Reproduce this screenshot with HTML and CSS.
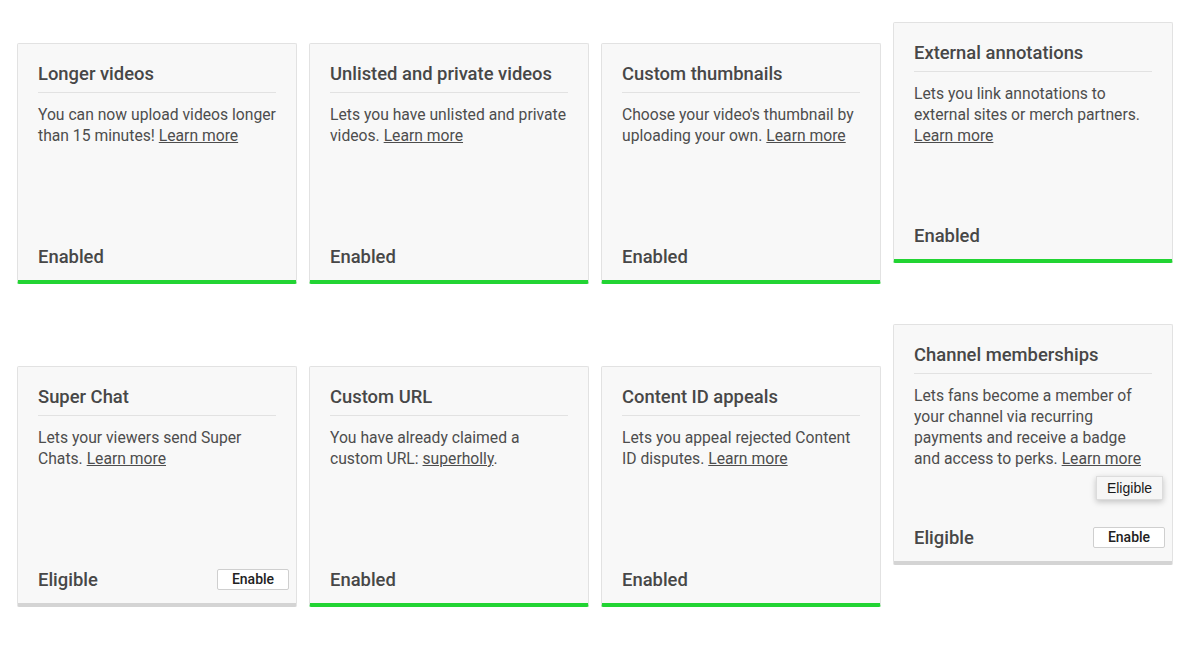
FILE: index.html
```html
<!DOCTYPE html>
<html lang="en">
<head>
<meta charset="utf-8">
<title>Channel features</title>
<link rel="stylesheet" href="styles.css">
</head>
<body>
<main class="features">
  <section class="row row-first">
    <article class="card enabled">
      <h2 class="card-title">Longer videos</h2>
      <p class="card-desc">You can now upload videos longer than 15 minutes! <a href="#">Learn more</a></p>
      <div class="card-foot"><span class="status">Enabled</span></div>
    </article>
    <article class="card enabled">
      <h2 class="card-title">Unlisted and private videos</h2>
      <p class="card-desc">Lets you have unlisted and private videos. <a href="#">Learn more</a></p>
      <div class="card-foot"><span class="status">Enabled</span></div>
    </article>
    <article class="card enabled">
      <h2 class="card-title">Custom thumbnails</h2>
      <p class="card-desc">Choose your video's thumbnail by uploading your own. <a href="#">Learn more</a></p>
      <div class="card-foot"><span class="status">Enabled</span></div>
    </article>
    <article class="card enabled lift-1">
      <h2 class="card-title">External annotations</h2>
      <p class="card-desc">Lets you link annotations to external sites or merch partners. <a href="#">Learn more</a></p>
      <div class="card-foot"><span class="status">Enabled</span></div>
    </article>
  </section>
  <section class="row">
    <article class="card eligible">
      <h2 class="card-title">Super Chat</h2>
      <p class="card-desc">Lets your viewers send Super Chats. <a href="#">Learn more</a></p>
      <div class="card-foot"><span class="status">Eligible</span><button class="enable-btn">Enable</button></div>
    </article>
    <article class="card enabled">
      <h2 class="card-title">Custom URL</h2>
      <p class="card-desc">You have already claimed a custom URL: <a href="#">superholly</a>.</p>
      <div class="card-foot"><span class="status">Enabled</span></div>
    </article>
    <article class="card enabled">
      <h2 class="card-title">Content ID appeals</h2>
      <p class="card-desc">Lets you appeal rejected Content ID disputes. <a href="#">Learn more</a></p>
      <div class="card-foot"><span class="status">Enabled</span></div>
    </article>
    <article class="card eligible lift-2">
      <h2 class="card-title">Channel memberships</h2>
      <p class="card-desc">Lets fans become a member of your channel via recurring payments and receive a badge and access to perks. <a href="#">Learn more</a></p>
      <div class="card-foot"><span class="status">Eligible</span><button class="enable-btn">Enable</button></div>
      <div class="tooltip">Eligible</div>
    </article>
  </section>
</main>
</body>
</html>
```

FILE: styles.css
```css
html, body {
  margin: 0;
  padding: 0;
  background: #ffffff;
}

body {
  font-family: Roboto, "Liberation Sans", Arial, sans-serif;
  color: #444;
}

.features {
  padding: 22px 0 0 17px;
  display: flex;
  flex-direction: column;
  gap: 40px;
}

.row {
  display: flex;
  align-items: flex-end;
  gap: 12px;
}

.row-first {
  min-height: 261px;
}

.card {
  position: relative;
  box-sizing: border-box;
  width: 280px;
  height: 241px;
  background: #f8f8f8;
  border: 1px solid #e2e2e2;
  border-bottom: 4px solid #22d433;
  border-radius: 2px;
  padding: 18px 20px 11px 20px;
  display: flex;
  flex-direction: column;
}

.card.eligible {
  border-bottom-color: #d4d4d4;
}

.card.lift-1 {
  margin-bottom: 21px;
}

.card.lift-2 {
  margin-bottom: 42px;
}

.card-title {
  margin: 0;
  font-size: 18.4px;
  font-weight: 500;
  line-height: 24px;
  color: #474747;
  padding-bottom: 6px;
  border-bottom: 1px solid #e2e2e2;
  white-space: nowrap;
}

.card-desc {
  margin: 11px 0 0 0;
  font-size: 15.7px;
  line-height: 21px;
  color: #4d4d4d;
}

.card-desc a {
  color: #4d4d4d;
  text-decoration: underline;
}

.card-foot {
  margin-top: auto;
  display: flex;
  align-items: center;
  justify-content: space-between;
  height: 24px;
}

.status {
  font-size: 18.4px;
  font-weight: 500;
  line-height: 24px;
  color: #474747;
}

.enable-btn {
  margin-right: -13px;
  margin-bottom: 2px;
  width: 72px;
  height: 21px;
  padding: 0;
  background: #ffffff;
  border: 1px solid #cfcfcf;
  border-radius: 2px;
  font-family: Roboto, "Liberation Sans", Arial, sans-serif;
  font-size: 14px;
  font-weight: 500;
  color: #222;
  line-height: 19px;
}

.tooltip {
  position: absolute;
  left: 202px;
  top: 151px;
  width: 67px;
  height: 24px;
  box-sizing: border-box;
  background: #f6f6f6;
  border: 1px solid #dcdcdc;
  box-shadow: 0 2px 6px rgba(0, 0, 0, 0.22);
  font-family: "Liberation Sans", Arial, sans-serif;
  font-size: 14px;
  line-height: 22px;
  text-align: center;
  color: #1a1a1a;
}
```
